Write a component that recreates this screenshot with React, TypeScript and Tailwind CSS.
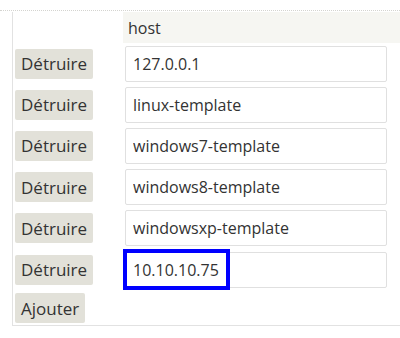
const hosts = [
  "127.0.0.1",
  "linux-template",
  "windows7-template",
  "windows8-template",
  "windowsxp-template",
  "10.10.10.75",
];

function DestroyButton() {
  return (
    <button className="h-[30px] px-[6px] bg-[#e2e1d9] text-[#333] text-[17px] leading-none rounded-[2px]">
      Détruire
    </button>
  );
}

export default function App() {
  return (
    <div className="w-[400px] h-[338px] overflow-hidden bg-white text-[#333] font-['Open_Sans',sans-serif]">
      <div className="h-[10px]" />
      <div className="border-t border-dotted border-[#d4d4d0]" />
      <div className="ml-[12px] mt-[1px] border-l border-b border-[#e2e2e2]">
        <div className="grid grid-cols-[110px_1fr]">
          <div className="h-[31px]" />
          <div className="h-[31px] bg-[#f6f6f2] flex items-center pl-[5px] text-[16px]">host</div>

          {hosts.map((h, i) => (
            <div key={h} className="contents">
              <div className="h-[41.2px] flex items-center pl-[2px]">
                <DestroyButton />
              </div>
              <div className="h-[41.2px] flex items-center pl-[2px] pr-[13px]">
                <div className="relative w-full">
                  <input
                    readOnly
                    value={h}
                    className="w-full h-[36px] border border-[#e0e0e0] rounded-[2px] px-[7px] text-[16px] text-[#333] bg-white outline-none"
                  />
                  {i === hosts.length - 1 && (
                    <div className="absolute left-[-2px] top-[-3px] w-[107px] h-[41px] border-[4px] border-[#0000ff]" />
                  )}
                </div>
              </div>
            </div>
          ))}

          <div className="pl-[2px] pt-[3px] pb-[2px]">
            <button className="h-[30px] px-[6px] bg-[#e2e1d9] text-[#333] text-[17px] leading-none rounded-[2px]">
              Ajouter
            </button>
          </div>
          <div />
        </div>
      </div>
    </div>
  );
}
